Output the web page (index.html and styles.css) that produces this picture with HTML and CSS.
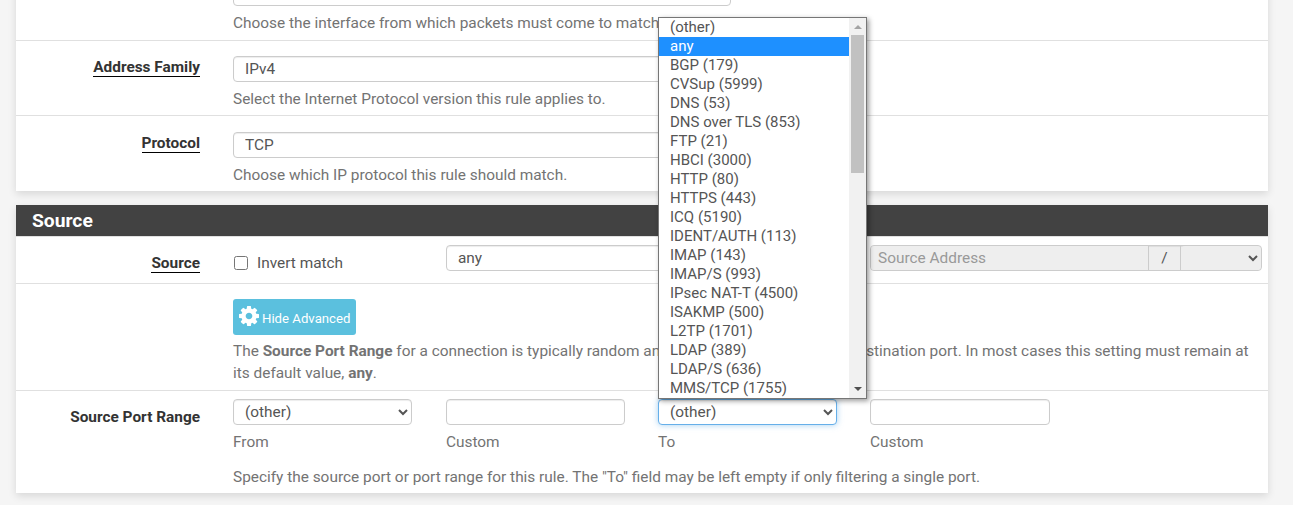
FILE: index.html
```html
<!DOCTYPE html>
<html lang="en">
<head>
  <meta charset="UTF-8" />
  <title>Firewall: Rules: Edit</title>
  <link rel="stylesheet" href="styles.css">
</head>
<body>
  <div class="page">
    <div class="panel panel-top">
      <div class="row row-interface">
        <div class="row-label"></div>
        <div class="row-body">
          <select class="wide"><option>WAN</option></select>
          <div class="help">Choose the interface from which packets must come to match this rule.</div>
        </div>
      </div>
      <div class="row">
        <div class="row-label"><span class="req">Address Family</span></div>
        <div class="row-body">
          <select class="wide"><option>IPv4</option></select>
          <div class="help">Select the Internet Protocol version this rule applies to.</div>
        </div>
      </div>
      <div class="row row-protocol">
        <div class="row-label"><span class="req">Protocol</span></div>
        <div class="row-body">
          <select class="wide"><option>TCP</option></select>
          <div class="help">Choose which IP protocol this rule should match.</div>
        </div>
      </div>
    </div>

    <div class="panel">
      <h2 class="panel-title">Source</h2>
      <div class="row row-source">
        <div class="row-label"><span class="req">Source</span></div>
        <div class="row-body fields">
          <label class="check"><input type="checkbox"> Invert match</label>
          <select class="span-two"><option>any</option></select>
          <div class="addr-group">
            <input type="text" placeholder="Source Address" disabled>
            <span class="addr-slash">/</span>
            <select disabled><option></option></select>
          </div>
        </div>
      </div>
      <div class="row row-adv">
        <div class="row-label"></div>
        <div class="row-body">
          <button class="btn-info" type="button">
            <svg class="cog" viewBox="0 -128 1536 1536"><path fill="#fff" d="M1024 640q0-106-75-181t-181-75-181 75-75 181 75 181 181 75 181-75 75-181zm512-109v222q0 12-8 23t-20 13l-185 28q-19 54-39 91 35 50 107 138 10 12 10 25t-9 23q-27 37-99 108t-94 71q-12 0-26-9l-138-108q-44 23-91 38-16 136-29 186-7 28-36 28h-222q-14 0-24.5-8.5t-11.5-21.5l-28-184q-49-16-90-37l-141 107q-10 9-25 9-14 0-25-11-126-114-165-168-7-10-7-23 0-12 8-23 15-21 51-66.5t54-70.5q-27-50-41-99l-183-27q-13-2-21-12.5t-8-23.5v-222q0-12 8-23t19-13l186-28q14-46 39-92-40-57-107-138-10-12-10-24 0-10 9-23 26-36 98.5-107.5t94.5-71.5q13 0 26 10l138 107q44-23 91-38 16-136 29-186 7-28 36-28h222q14 0 24.5 8.5t11.5 21.5l28 184q49 16 90 37l142-107q9-9 24-9 13 0 25 10 129 119 165 170 7 8 7 22 0 12-8 23-15 21-51 66.5t-54 70.5q26 50 41 98l183 28q13 2 21 12.5t8 23.5z"/></svg>
            Hide Advanced
          </button>
          <div class="help">The <b>Source Port Range</b> for a connection is typically random and almost never equal to the destination port. In most cases this setting must remain at its default value, <b>any</b>.</div>
        </div>
      </div>
      <div class="row row-ports">
        <div class="row-label"><span class="plain">Source Port Range</span></div>
        <div class="row-body">
          <div class="fields">
            <div>
              <select><option>(other)</option></select>
              <div class="cap">From</div>
            </div>
            <div>
              <input type="text">
              <div class="cap">Custom</div>
            </div>
            <div>
              <select class="focused"><option>(other)</option></select>
              <div class="cap">To</div>
            </div>
            <div>
              <input type="text">
              <div class="cap">Custom</div>
            </div>
          </div>
          <div class="help help-ports">Specify the source port or port range for this rule. The "To" field may be left empty if only filtering a single port.</div>
        </div>
      </div>
    </div>
  </div>

  <!-- open dropdown of the "To" select -->
  <div class="dropdown">
    <ul class="dropdown-list">
      <li>(other)</li>
      <li class="selected">any</li>
      <li>BGP (179)</li>
      <li>CVSup (5999)</li>
      <li>DNS (53)</li>
      <li>DNS over TLS (853)</li>
      <li>FTP (21)</li>
      <li>HBCI (3000)</li>
      <li>HTTP (80)</li>
      <li>HTTPS (443)</li>
      <li>ICQ (5190)</li>
      <li>IDENT/AUTH (113)</li>
      <li>IMAP (143)</li>
      <li>IMAP/S (993)</li>
      <li>IPsec NAT-T (4500)</li>
      <li>ISAKMP (500)</li>
      <li>L2TP (1701)</li>
      <li>LDAP (389)</li>
      <li>LDAP/S (636)</li>
      <li>MMS/TCP (1755)</li>
    </ul>
    <div class="scrollbar">
      <span class="arrow-up"></span>
      <span class="thumb"></span>
      <span class="arrow-down"></span>
    </div>
  </div>
</body>
</html>
```

FILE: styles.css
```css
html, body {
  margin: 0;
  padding: 0;
  height: 100%;
  overflow: hidden;
  background: #f5f5f5;
  font-family: Roboto, sans-serif;
  font-size: 15.4px;
  line-height: 22px;
  color: #333;
}

.page {
  margin-top: -36px;
  padding: 0 25px 0 16px;
}

.panel {
  background: #fff;
  box-shadow: 0 3px 8px rgba(0, 0, 0, 0.12);
  margin-bottom: 14px;
}

.panel-title {
  margin: 0;
  height: 31px;
  padding-left: 16px;
  background: #424242;
  color: #fff;
  font-size: 19.25px;
  font-weight: 700;
  line-height: 31px;
}

.row {
  display: flex;
  border-top: 1px solid #e0e0e0;
  padding: 15px 6px 6px 0;
  height: 75px;
  box-sizing: border-box;
}

.row-interface {
  height: 76px;
}

.row-protocol {
  height: 76px;
  padding-top: 16px;
}

.row-label {
  flex: none;
  width: 184px;
  margin-right: 33px;
  text-align: right;
  font-weight: 700;
  color: #333;
}

.row-body {
  flex: 1;
  min-width: 0;
}

.req {
  border-bottom: 1px solid #000;
}

.help {
  margin-top: 6px;
  color: #737373;
}

select, input[type="text"] {
  display: block;
  box-sizing: border-box;
  width: 179px;
  height: 26px;
  padding: 0 7px;
  border: 1px solid #ccc;
  border-radius: 4px;
  background-color: #fff;
  font-family: inherit;
  font-size: 15.4px;
  color: #555;
  box-shadow: inset 0 1px 1px rgba(0, 0, 0, 0.075);
}

select.wide {
  width: 498px;
}

select.span-two {
  grid-column: span 2;
  width: 391px;
}

select.focused {
  border-color: #66afe9;
  box-shadow: inset 0 1px 1px rgba(0, 0, 0, 0.075), 0 0 6px rgba(102, 175, 233, 0.6);
}

.fields {
  display: grid;
  grid-template-columns: 213px 212px 212px 1fr;
}

.row-source {
  height: 47px;
  padding: 8px 6px 0 0;
}

.row-source .row-label {
  padding-top: 7px;
}

.check {
  display: flex;
  align-items: center;
  height: 35px;
  color: #555;
}

.check input {
  width: 14px;
  height: 14px;
  margin: 0 9px 0 1px;
}

.addr-group {
  display: flex;
  width: 392px;
  height: 26px;
  box-sizing: border-box;
  border: 1px solid #ccc;
  border-radius: 4px;
  background: #eee;
  box-shadow: inset 0 1px 1px rgba(0, 0, 0, 0.075);
}

.addr-group input[type="text"] {
  flex: 1;
  width: auto;
  min-width: 0;
  height: 24px;
  border: none;
  border-radius: 3px 0 0 3px;
  background: #eee;
  box-shadow: none;
}

.addr-group input::placeholder {
  color: #999;
}

.addr-group select {
  flex: none;
  width: 80px;
  height: 24px;
  border: none;
  background-color: #eee;
  box-shadow: none;
  opacity: 1;
}

.addr-slash {
  flex: none;
  width: 33px;
  border-left: 1px solid #ccc;
  border-right: 1px solid #ccc;
  box-sizing: border-box;
  text-align: center;
  line-height: 24px;
  color: #555;
}

.row-adv {
  height: 107px;
  padding: 15px 6px 0 0;
}

.btn-info {
  display: flex;
  align-items: center;
  width: 123px;
  height: 36px;
  padding: 2px 0 0 6px;
  border: none;
  border-radius: 3px;
  background: #5bc0de;
  color: #fff;
  font-family: inherit;
  font-size: 13.2px;
}

.cog {
  width: 20px;
  height: 20px;
  margin-right: 3px;
  margin-top: -5px;
}

.row-adv .help {
  margin-top: 5px;
}

.row-adv .help b {
  font-weight: 700;
}

.row-ports {
  height: 103px;
  padding: 8px 6px 0 0;
}

.row-ports .row-label {
  padding-top: 7px;
}

.row-ports .fields > div:last-child input {
  width: 180px;
}

.cap {
  margin-top: 6px;
  color: #737373;
}

.help-ports {
  margin-top: 13px;
}

/* dropdown popup, lies over the form */
.dropdown {
  position: absolute;
  left: 658px;
  top: 17px;
  width: 207px;
  height: 380px;
  display: flex;
  border: 1px solid #767676;
  background: #fff;
  box-shadow: 2px 2px 5px rgba(0, 0, 0, 0.4);
}

.dropdown-list {
  flex: 1;
  margin: 0;
  padding: 0;
  list-style: none;
  font-size: 15px;
  line-height: 19px;
  color: #555;
}

.dropdown-list li {
  height: 19px;
  padding-left: 11px;
}

.dropdown-list li.selected {
  background: #1e90ff;
  color: #fff;
}

.scrollbar {
  position: relative;
  flex: none;
  width: 17px;
  background: #f1f1f1;
}

.thumb {
  position: absolute;
  left: 2px;
  top: 17px;
  width: 13px;
  height: 138px;
  background: #c1c1c1;
}

.arrow-up, .arrow-down {
  position: absolute;
  left: 5px;
  width: 0;
  height: 0;
  border-left: 4px solid transparent;
  border-right: 4px solid transparent;
}

.arrow-up {
  top: 7px;
  border-bottom: 4px solid #a3a3a3;
}

.arrow-down {
  bottom: 7px;
  border-top: 4px solid #505050;
}
```
